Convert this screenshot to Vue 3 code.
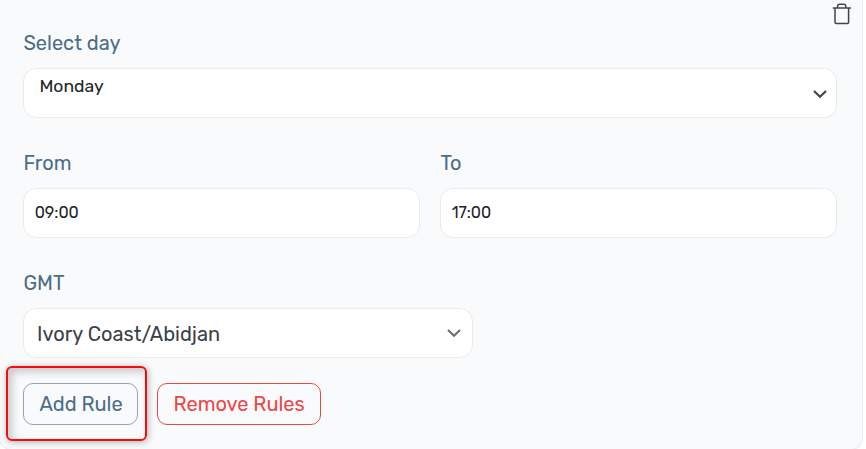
<template>
  <div class="rule-card">
    <button class="delete-button" aria-label="Delete">
      <svg width="20" height="22" viewBox="0 0 20 22" fill="none" stroke="#40464f" stroke-width="1.5">
        <path d="M.8 5h18.1M5.6 4.8V3.4Q5.6 1.3 7.7 1.3h4q2.1 0 2.1 2.1v1.4M3 5.5v13.8q0 1.2 1.2 1.2h11.2q1.2 0 1.2-1.2V5.5" />
      </svg>
    </button>

    <div class="field">
      <label class="label">Select day</label>
      <div class="control select">
        <span class="day">{{ rule.day }}</span>
        <svg class="chevron day-chevron" width="16" height="10" viewBox="0 0 16 10">
          <path d="M2 2l6 5.8L14 2" />
        </svg>
      </div>
    </div>

    <div class="time-row">
      <div v-for="t in times" :key="t.name" class="field">
        <label class="label">{{ t.label }}</label>
        <div class="control time">{{ rule[t.name] }}</div>
      </div>
    </div>

    <div class="field">
      <label class="label">GMT</label>
      <div class="control select zone">
        <span class="zone-name">{{ rule.zone }}</span>
        <svg class="chevron" width="16" height="10" viewBox="0 0 16 10">
          <path d="M2 2l6 5.8L14 2" />
        </svg>
      </div>
    </div>

    <div class="actions">
      <div class="highlight-wrap">
        <button class="btn add">Add Rule</button>
        <div class="highlight"></div>
      </div>
      <button class="btn remove">Remove Rules</button>
    </div>
  </div>
</template>

<script setup>
import { reactive } from 'vue';

const rule = reactive({
  day: 'Monday',
  from: '09:00',
  to: '17:00',
  zone: 'Ivory Coast/Abidjan'
});

const times = [
  { name: 'from', label: 'From' },
  { name: 'to', label: 'To' }
];
</script>

<style>
body {
  background: #fff;
  overflow: hidden;
}
</style>

<style scoped>
.rule-card {
  position: relative;
  box-sizing: border-box;
  width: 864px; height: 450px;
  margin-left: -1px;
  padding: 28px 25px 0 23px;
  background: #f9fafc;
  border: 1px solid #e9ecef;
  border-top: 0;
  border-radius: 0 0 12px 12px;
  font-family: Rubik, Roboto, sans-serif;
}

.delete-button {
  position: absolute;
  top: 3px; right: 10px;
  display: flex;
  padding: 0; border: 0;
  background: none;
}

.label {
  display: block;
  height: 30px; margin-bottom: 10px;
  padding-left: .4px;
  font-size: 20px; line-height: 30px;
  color: #4c6c87;
  white-space: nowrap;
}

.control {
  box-sizing: border-box;
  display: flex; align-items: center;
  height: 50px;
  background: #fff;
  border: 1px solid #ebebeb;
  border-radius: 13px;
  color: #212529;
  white-space: nowrap;
}
.select { justify-content: space-between; }

.day {
  align-self: flex-start;
  margin-left: 15.4px; padding-top: 4px;
  font-size: 17.6px; line-height: 26px;
}

.time-row {
  display: grid;
  grid-template-columns: 1fr 1fr;
  gap: 20px;
  margin: 30px 0;
}
.time {
  padding: 0 0 1px 10.7px;
  font-size: 16px;
}

.zone { width: 450px; }
.zone-name {
  margin-left: 13px; padding-top: 2px;
  font-size: 20px;
  color: #3b4047;
}

.chevron {
  margin-right: 10px;
  fill: none;
  stroke: #707070; stroke-width: 2.2;
}
.day-chevron {
  margin-right: 8px;
  margin-top: 1px;
  stroke: #444;
}

.actions {
  display: flex; gap: 19px;
  margin-top: 25px;
}
.btn {
  box-sizing: border-box;
  display: block;
  height: 42px;
  padding: 0 0 0 15.5px;
  background: transparent;
  border: 1px solid;
  border-radius: 10px;
  font-family: inherit; font-size: 20px;
  text-align: left;
  white-space: nowrap;
}
.add { width: 115px; color: #4c6c87; border-color: #93a5b4; }
.remove { width: 164px; color: #eb4747; }

/* red callout drawn around the Add Rule button */
.highlight-wrap { position: relative; }
.highlight {
  position: absolute;
  top: -17px; left: -17.5px;
  box-sizing: border-box;
  width: 141px; height: 75px;
  border: 2px solid #f90b0b;
  border-radius: 6px;
  box-shadow: 1px 1px 7px rgba(0, 0, 0, .3), inset 4px 4px 8px rgba(0, 0, 0, .2);
  pointer-events: none;
}
</style>
